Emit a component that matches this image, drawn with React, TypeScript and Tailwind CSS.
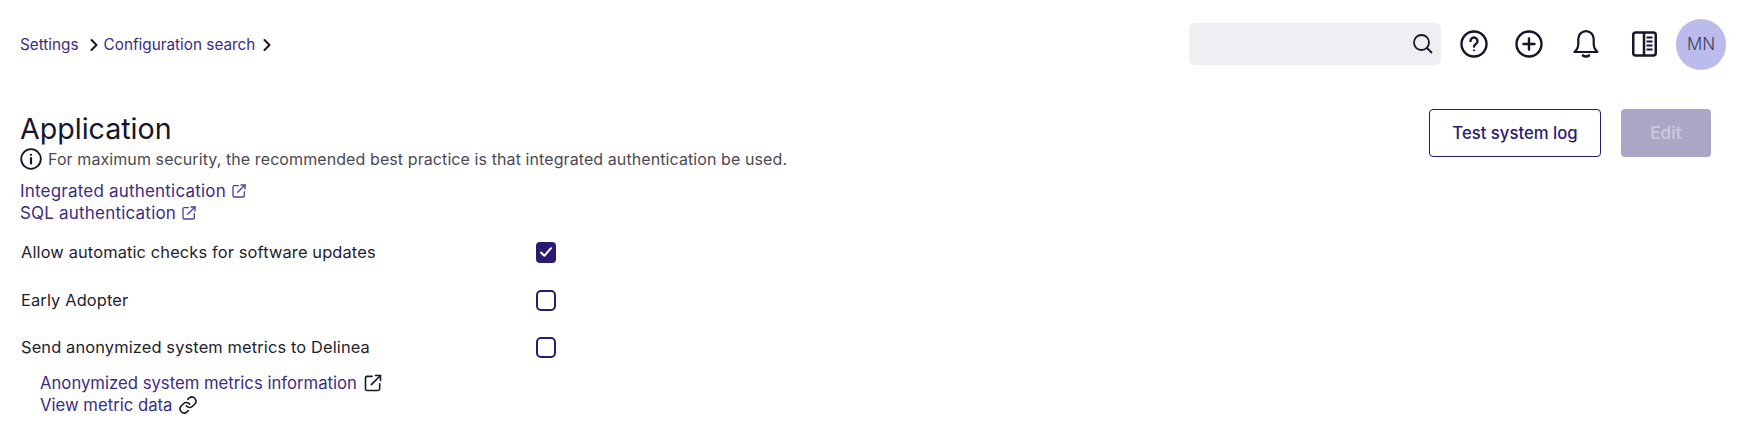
import React from "react";

const F = "font-['Inter',sans-serif]";

function ExtIcon({ size, color, sw }: { size: number; color: string; sw: number }) {
  return (
    <svg width={size} height={size} viewBox="0 0 24 24" fill="none" stroke={color} strokeWidth={sw} strokeLinecap="round" strokeLinejoin="round">
      <path d="M11 4H5a2 2 0 0 0-2 2v13a2 2 0 0 0 2 2h13a2 2 0 0 0 2-2v-6" />
      <path d="M15 3h6v6" />
      <path d="M21 3 10 14" />
    </svg>
  );
}

function Chevron() {
  return (
    <svg width="10" height="14" viewBox="0 0 10 14" fill="none" stroke="#15152b" strokeWidth="2" strokeLinecap="round" strokeLinejoin="round">
      <path d="M2.500 2l5 5-5 5" />
    </svg>
  );
}

function Row({ label, checked, className }: { label: string; checked?: boolean; className: string }) {
  return (
    <div className={`flex items-center h-5 ${className}`}>
      <span className="w-[516px] pl-px text-[16.400px] text-[#22222e] tracking-[0.14px]">{label}</span>
      {checked ? (
        <span className="w-5 h-[21px] rounded-[4px] bg-[#2a1a70] flex items-center justify-center">
          <svg width="14" height="12" viewBox="0 0 14 12" fill="none" stroke="#fff" strokeWidth="2" strokeLinecap="round" strokeLinejoin="round">
            <path d="M2 6.500l3.300 3.300 6.700-7.600" />
          </svg>
        </span>
      ) : (
        <span className="w-5 h-[21px] rounded-[5px] border-2 border-[#2a1a70] bg-white" />
      )}
    </div>
  );
}

export default function App() {
  return (
    <div className={`w-[1737px] h-[442px] bg-white overflow-hidden ${F}`}>
      <header className="flex items-center justify-between h-[51px] mt-[19px] pl-[20px] pr-[11px]">
        <nav className="flex items-center text-[15.300px] text-[#3a2c85] mt-[1px]">
          <span>Settings</span>
          <span className="ml-[10px] mr-[5px] flex"><Chevron /></span>
          <span>Configuration search</span>
          <span className="ml-[7px] flex"><Chevron /></span>
        </nav>
        <div className="flex items-center">
          <div className="w-[252px] h-[42px] -mt-[2px] rounded-[5px] bg-[#eeeff3] flex items-center justify-end pr-[8px]">
            <svg width="21" height="21" viewBox="0 0 21 21" fill="none" stroke="#17172a" strokeWidth="1.800" strokeLinecap="round">
              <circle cx="9.500" cy="9.500" r="7.500" />
              <path d="M15 15l4.500 4.500" />
            </svg>
          </div>
          <svg className="ml-[19px] -mt-[2px]" width="28" height="28" viewBox="0 0 28 28" fill="none" stroke="#15152b" strokeWidth="2.400" strokeLinecap="round">
            <circle cx="14" cy="14" r="12.500" />
            <path d="M10.500 11a3.500 3.500 0 1 1 5.400 3c-1.200.8-1.900 1.400-1.900 2.600" />
            <circle cx="14" cy="20.300" r="0.600" fill="#15152b" strokeWidth="1" />
          </svg>
          <svg className="ml-[27px] -mt-[2px]" width="28" height="28" viewBox="0 0 28 28" fill="none" stroke="#15152b" strokeWidth="2.400" strokeLinecap="round">
            <circle cx="14" cy="14" r="12.500" />
            <path d="M14 8.500v11M8.500 14h11" />
          </svg>
          <svg className="ml-[30px] -mt-[2px]" width="26" height="29" viewBox="0 0 26 29" fill="none" stroke="#15152b" strokeWidth="2.200" strokeLinecap="round" strokeLinejoin="round">
            <path d="M1.500 23h23c-2.200-2-3.800-4-3.800-8v-5.200a7.700 7.700 0 0 0-15.400 0V15c0 4-1.600 6-3.800 8z" />
            <path d="M10 26.500c1.500 1.300 4.500 1.300 6 0" strokeWidth="2.600" />
          </svg>
          <svg className="ml-[33px] -mt-[2px]" width="25" height="26" viewBox="0 0 25 26" fill="none" stroke="#15152b" strokeWidth="2.500" strokeLinejoin="round">
            <rect x="1.250" y="1.500" width="22.500" height="23" rx="2.500" />
            <path d="M12 1.500v23" />
            <path d="M14.500 6.500h6M14.500 10.500h6M14.500 14.500h6M14.500 18.500h6" strokeWidth="2.200" />
          </svg>
          <div className="ml-[19px] w-[50px] h-[51px] rounded-full bg-[#bbbbec] flex items-center justify-center text-[17px] font-light text-[#3e3e5c]">
            MN
          </div>
        </div>
      </header>

      <main className="relative pl-[20px] pt-[42px]">
        <div className="absolute right-[26px] top-[39px] flex gap-[20px]">
          <button className="w-[172px] h-[48px] pt-[1px] rounded-[4px] border border-[#2a1a70] bg-white text-[16.700px] font-medium text-[#2a1a70]">
            Test system log
          </button>
          <button className="w-[90px] h-[48px] pt-[1px] rounded-[4px] bg-[#aba6c6] text-[17px] font-semibold text-[#c9c6dc]">
            Edit
          </button>
        </div>

        <h1 className="text-[28.600px] leading-[34px] text-[#15152b] font-normal">Application</h1>
        <div className="flex items-center h-[20px] mt-[3px] text-[16px] tracking-[0.09px] text-[#4a4a55]">
          <svg width="22" height="22" viewBox="0 0 22 22" fill="none" stroke="#15152b" strokeWidth="1.800" strokeLinecap="round">
            <circle cx="11" cy="11" r="9.800" />
            <path d="M11 10v5.500" strokeWidth="2.200" />
            <circle cx="11" cy="6.800" r="0.500" fill="#15152b" strokeWidth="1.200" />
          </svg>
          <span className="ml-[6px]">For maximum security, the recommended best practice is that integrated authentication be used.</span>
        </div>

        <div className="mt-[11px] flex flex-col text-[17px] tracking-[0.2px] leading-[22px] text-[#3a2c85]">
          <a className="flex items-center gap-[5px]">
            Integrated authentication
            <ExtIcon size={16} color="#4d4192" sw={2} />
          </a>
          <a className="flex items-center gap-[5px]">
            SQL authentication
            <ExtIcon size={16} color="#4d4192" sw={2} />
          </a>
        </div>

        <Row className="mt-[18px]" label="Allow automatic checks for software updates" checked />
        <Row className="mt-[28px]" label="Early Adopter" />
        <Row className="mt-[27px]" label="Send anonymized system metrics to Delinea" />

        <div className="mt-[15px] pl-[20px] flex flex-col text-[16.700px] leading-[22px] text-[#3a2c85]">
          <a className="flex items-center gap-[6px]">
            Anonymized system metrics information
            <ExtIcon size={20} color="#15152b" sw={1.900} />
          </a>
          <a className="flex items-center gap-[6px]">
            View metric data
            <svg width="20" height="20" viewBox="0 0 24 24" fill="none" stroke="#15152b" strokeWidth="1.900" strokeLinecap="round" strokeLinejoin="round">
              <path d="M10 13a5 5 0 0 0 7.500.5l3-3a5 5 0 0 0-7-7l-1.700 1.700" />
              <path d="M14 11a5 5 0 0 0-7.500-.5l-3 3a5 5 0 0 0 7 7l1.700-1.700" />
            </svg>
          </a>
        </div>
      </main>
    </div>
  );
}
